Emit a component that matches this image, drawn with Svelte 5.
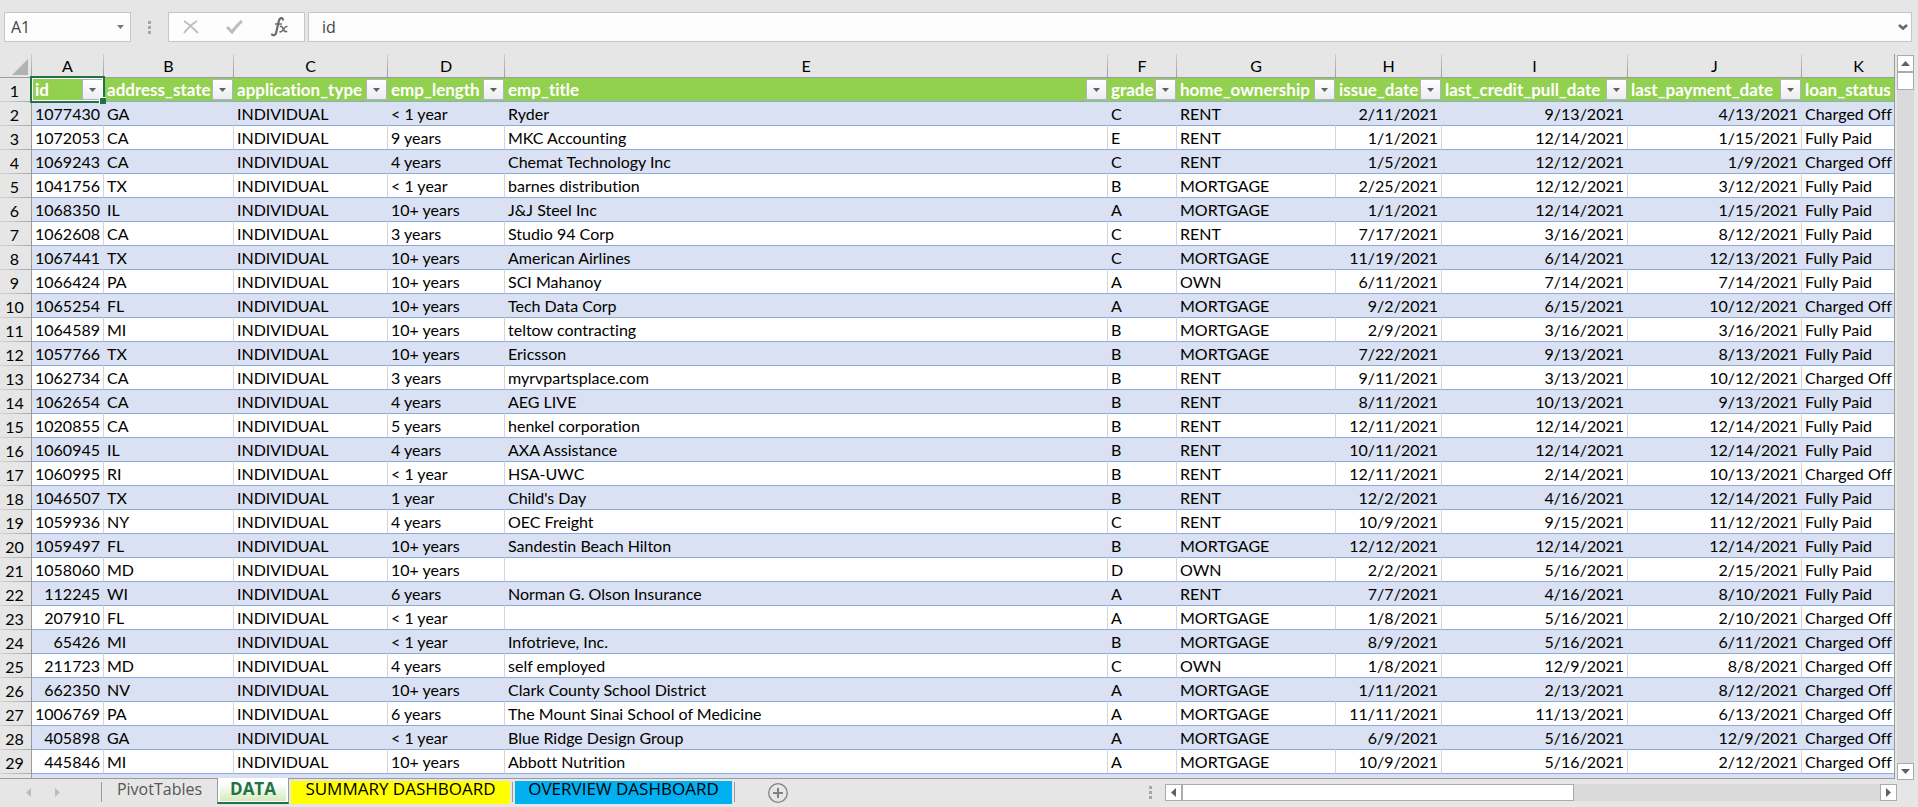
<script>
  const columns = [
    { letter: 'A', name: 'id', width: 72, align: 'right' },
    { letter: 'B', name: 'address_state', width: 130 },
    { letter: 'C', name: 'application_type', width: 154 },
    { letter: 'D', name: 'emp_length', width: 117 },
    { letter: 'E', name: 'emp_title', width: 603 },
    { letter: 'F', name: 'grade', width: 69 },
    { letter: 'G', name: 'home_ownership', width: 159 },
    { letter: 'H', name: 'issue_date', width: 106, align: 'right' },
    { letter: 'I', name: 'last_credit_pull_date', width: 186, align: 'right' },
    { letter: 'J', name: 'last_payment_date', width: 174, align: 'right' },
    { letter: 'K', name: 'loan_status', width: 114 }
  ];
  const tableWidth = columns.reduce((sum, c) => sum + c.width, 32);

  const rows = `1077430|GA|< 1 year|Ryder|C|RENT|2/11/2021|9/13/2021|4/13/2021|Charged Off
1072053|CA|9 years|MKC Accounting|E|RENT|1/1/2021|12/14/2021|1/15/2021|Fully Paid
1069243|CA|4 years|Chemat Technology Inc|C|RENT|1/5/2021|12/12/2021|1/9/2021|Charged Off
1041756|TX|< 1 year|barnes distribution|B|MORTGAGE|2/25/2021|12/12/2021|3/12/2021|Fully Paid
1068350|IL|10+ years|J&J Steel Inc|A|MORTGAGE|1/1/2021|12/14/2021|1/15/2021|Fully Paid
1062608|CA|3 years|Studio 94 Corp|C|RENT|7/17/2021|3/16/2021|8/12/2021|Fully Paid
1067441|TX|10+ years|American Airlines|C|MORTGAGE|11/19/2021|6/14/2021|12/13/2021|Fully Paid
1066424|PA|10+ years|SCI Mahanoy|A|OWN|6/11/2021|7/14/2021|7/14/2021|Fully Paid
1065254|FL|10+ years|Tech Data Corp|A|MORTGAGE|9/2/2021|6/15/2021|10/12/2021|Charged Off
1064589|MI|10+ years|teltow contracting|B|MORTGAGE|2/9/2021|3/16/2021|3/16/2021|Fully Paid
1057766|TX|10+ years|Ericsson|B|MORTGAGE|7/22/2021|9/13/2021|8/13/2021|Fully Paid
1062734|CA|3 years|myrvpartsplace.com|B|RENT|9/11/2021|3/13/2021|10/12/2021|Charged Off
1062654|CA|4 years|AEG LIVE|B|RENT|8/11/2021|10/13/2021|9/13/2021|Fully Paid
1020855|CA|5 years|henkel corporation|B|RENT|12/11/2021|12/14/2021|12/14/2021|Fully Paid
1060945|IL|4 years|AXA Assistance|B|RENT|10/11/2021|12/14/2021|12/14/2021|Fully Paid
1060995|RI|< 1 year|HSA-UWC|B|RENT|12/11/2021|2/14/2021|10/13/2021|Charged Off
1046507|TX|1 year|Child's Day|B|RENT|12/2/2021|4/16/2021|12/14/2021|Fully Paid
1059936|NY|4 years|OEC Freight|C|RENT|10/9/2021|9/15/2021|11/12/2021|Fully Paid
1059497|FL|10+ years|Sandestin Beach Hilton|B|MORTGAGE|12/12/2021|12/14/2021|12/14/2021|Fully Paid
1058060|MD|10+ years||D|OWN|2/2/2021|5/16/2021|2/15/2021|Fully Paid
112245|WI|6 years|Norman G. Olson Insurance|A|RENT|7/7/2021|4/16/2021|8/10/2021|Fully Paid
207910|FL|< 1 year||A|MORTGAGE|1/8/2021|5/16/2021|2/10/2021|Charged Off
65426|MI|< 1 year|Infotrieve, Inc.|B|MORTGAGE|8/9/2021|5/16/2021|6/11/2021|Charged Off
211723|MD|4 years|self employed|C|OWN|1/8/2021|12/9/2021|8/8/2021|Charged Off
662350|NV|10+ years|Clark County School District|A|MORTGAGE|1/11/2021|2/13/2021|8/12/2021|Charged Off
1006769|PA|6 years|The Mount Sinai School of Medicine|A|MORTGAGE|11/11/2021|11/13/2021|6/13/2021|Charged Off
405898|GA|< 1 year|Blue Ridge Design Group|A|MORTGAGE|6/9/2021|5/16/2021|12/9/2021|Charged Off
445846|MI|10+ years|Abbott Nutrition|A|MORTGAGE|10/9/2021|5/16/2021|2/12/2021|Charged Off`
    .split('\n')
    .map((line) => {
      const cells = line.split('|');
      cells.splice(2, 0, 'INDIVIDUAL');
      return cells;
    });

  const tabs = [
    { name: 'PivotTables', kind: 'plain' },
    { name: 'DATA', kind: 'active' },
    { name: 'SUMMARY DASHBOARD', kind: 'yellow' },
    { name: 'OVERVIEW DASHBOARD', kind: 'blue' }
  ];

  let cellName = $state('A1');
  let formula = $state('id');
  const dirs = {
    up: 'M0 5h9L4.500 0z',
    down: 'M0 0h9L4.500 5z',
    left: 'M5 0v9L0 4.500z',
    right: 'M0 0v9l5-4.500z'
  };
</script>

{#snippet arrow(dir)}
  <svg
    width={dir === 'up' || dir === 'down' ? 9 : 5}
    height={dir === 'up' || dir === 'down' ? 5 : 9}
    aria-hidden="true"><path d={dirs[dir]} fill="currentColor" /></svg>
{/snippet}

{#snippet grip()}
  <svg class="grip" width="3" height="13" aria-hidden="true">
    <path d="M0 0h3v3H0zM0 5h3v3H0zM0 10h3v3H0z" fill="currentColor" />
  </svg>
{/snippet}

<div class="app">
  <div class="formula-bar">
    <div class="name-box">
      <input aria-label="Name box" bind:value={cellName} />
      <button aria-label="Open name list">
        <svg width="7" height="4" aria-hidden="true"><path d="M0 0h7L3.500 4z" fill="currentColor" /></svg>
      </button>
    </div>
    {@render grip()}
    <div class="actions">
      <button aria-label="Cancel">
        <svg width="16" height="14" viewBox="0 0 16 14" fill="none" stroke="#bdbdbd" stroke-width="2"><path d="M1 1C6 4 11 9 15 13M14 1C9 4 5 8 1 13" /></svg>
      </button>
      <button aria-label="Enter">
        <svg width="18" height="14" viewBox="0 0 18 14" fill="none" stroke="#bdbdbd" stroke-width="3"><path d="M1 7l5 5C9 8 12 4 16 1" /></svg>
      </button>
      <button aria-label="Insert function">
        <svg width="17" height="20" viewBox="0 0 17 20" fill="none" stroke="#6a6a6a" stroke-linecap="round">
          <path d="M12 2.500C11 .2 8.500.5 7.800 4L5.200 15.500C4.600 18.200 2.500 19 1 17.500" stroke-width="2.200" />
          <path d="M4.500 7H10.500" stroke-width="1.400" />
          <path d="M9.500 9.500C12 7.800 12 16 15.500 14.500M15.800 9.500C13.500 8.500 12 15.800 9 14.800" stroke-width="1.600" />
        </svg>
      </button>
    </div>
    <div class="formula">
      <input aria-label="Formula" bind:value={formula} />
      <button aria-label="Expand formula bar">
        <svg width="10" height="7" viewBox="0 0 10 7" fill="none" stroke="#666" stroke-width="2.500"><path d="M1 1l4 3.500L9 1" /></svg>
      </button>
    </div>
  </div>

  <div class="workspace">
    <div class="sheet">
      <table style:width="{tableWidth}px">
        <colgroup>
          <col style:width="32px" />
          {#each columns as c}<col style:width="{c.width}px" />{/each}
        </colgroup>
        <thead>
          <tr class="letters">
            <th class="corner">
              <svg width="16" height="16" aria-hidden="true"><path d="M16 0v16H0z" fill="#b2b2b2" /></svg>
            </th>
            {#each columns as c}<th scope="col">{c.letter}</th>{/each}
          </tr>
        </thead>
        <tbody>
          <tr class="names">
            <th scope="row">1</th>
            {#each columns as c, i}
              <td class:selected={i === 0}>
                <div class="field">
                  <span>{c.name}</span>
                  <button aria-label="Filter {c.name}">
                    <svg width="7" height="4" aria-hidden="true"><path d="M0 0h7L3.500 4z" fill="currentColor" /></svg>
                  </button>
                </div>
                {#if i === 0}<div class="cursor"></div>{/if}
              </td>
            {/each}
          </tr>
          {#each rows as row, r}
            <tr class:band={r % 2 === 0}>
              <th scope="row">{r + 2}</th>
              {#each row as cell, i}<td class:right={columns[i].align === 'right'}>{cell}</td>{/each}
            </tr>
          {/each}
          <tr class="band">
            <th></th>
            {#each columns as c}<td></td>{/each}
          </tr>
        </tbody>
      </table>
    </div>
    <div class="scroll vertical">
      <button aria-label="Scroll up">{@render arrow('up')}</button>
      <div class="thumb"></div>
      <button class="end" aria-label="Scroll down">{@render arrow('down')}</button>
    </div>
  </div>

  <div class="footer">
    <div class="tab-area">
      <div class="steps">
        <button aria-label="Previous sheet">{@render arrow('left')}</button>
        <button aria-label="Next sheet">{@render arrow('right')}</button>
      </div>
      {#each tabs as t}
        <button class="tab {t.kind}"><span>{t.name}</span></button>
      {/each}
      <button class="add" aria-label="New sheet">
        <svg width="20" height="20" viewBox="0 0 20 20" fill="none" stroke="#808080"><circle cx="10" cy="10" r="9.300" stroke-width="1.300" /><path d="M10 5v10M5 10h10" stroke-width="2" /></svg>
      </button>
    </div>
    <div class="scroll-area">
      {@render grip()}
      <div class="scroll horizontal">
        <button aria-label="Scroll left">{@render arrow('left')}</button>
        <div class="thumb"></div>
        <button class="end" aria-label="Scroll right">{@render arrow('right')}</button>
      </div>
    </div>
  </div>
</div>

<style>
  :global(body) {
    margin: 0;
    background: #e6e6e6;
  }
  .app,
  .app * {
    box-sizing: border-box;
  }
  .app {
    display: flex;
    flex-direction: column;
    height: 100vh;
    overflow: hidden;
    background: #e6e6e6;
    color: #000;
    font: 16px/24px Lato, Carlito, sans-serif;
    font-variant-ligatures: none;
  }
  button,
  input {
    margin: 0;
    padding: 0;
    border: 0;
    background: none;
    font: inherit;
    color: inherit;
  }
  button {
    display: flex;
    align-items: center;
    justify-content: center;
    flex: none;
  }
  svg {
    display: block;
    flex: none;
  }

  .formula-bar {
    display: flex;
    align-items: center;
    flex: none;
    padding: 12px 6px 12px 4px;
    color: #444;
    font: 16px/22px "Open Sans", "Noto Sans", sans-serif;
  }
  .name-box,
  .actions,
  .formula {
    display: flex;
    height: 30px;
    border: 1px solid #c6c6c6;
    background: #fdfdfd;
  }
  .name-box {
    width: 127px;
  }
  .name-box input {
    flex: 1;
    min-width: 0;
    padding-left: 6px;
  }
  .name-box button {
    width: 20px;
    color: #777;
  }
  .grip {
    color: #a6a6a6;
  }
  .formula-bar > :global(.grip) {
    margin: 0 17px;
  }
  .actions {
    width: 137px;
    padding-right: 3px;
  }
  .actions button {
    flex: 1;
  }
  .formula {
    flex: 1;
    margin-left: 3px;
  }
  .formula input {
    flex: 1;
    min-width: 0;
    padding-left: 13px;
  }
  .formula button {
    width: 16px;
  }

  .workspace {
    display: flex;
    flex: 1;
    min-height: 0;
    padding-right: 4px;
    gap: 2px;
  }
  .sheet {
    flex: 1;
    min-width: 0;
    overflow: hidden;
    border-right: 1px solid #9b9b9b;
    border-bottom: 1px solid #9b9b9b;
    background: #e6e6e6;
  }
  table {
    table-layout: fixed;
    border-collapse: separate;
    border-spacing: 0;
  }
  th,
  td {
    height: 24px;
    padding: 0;
    white-space: nowrap;
    line-height: 23px;
    overflow: hidden;
  }
  th {
    background: #e6e6e6;
    font-weight: 400;
    text-align: center;
  }
  .letters th {
    border-right: 1px solid;
    border-bottom: 1px solid #9b9b9b;
    border-image: linear-gradient(#cfcfcf, #9b9b9b) 1;
  }
  .letters .corner svg {
    margin: 2px 0 0 12px;
  }
  tbody th {
    padding-right: 2px;
    border-right: 1px solid #9b9b9b;
    background: linear-gradient(90deg, #d6d6d6, #a6a6a6) bottom / 100% 1px no-repeat #e6e6e6;
  }
  td {
    padding: 0 3px;
    background: #fff;
    border-right: 1px solid #d4d4d4;
    border-bottom: 1px solid #8ea9db;
  }
  .band td {
    background: #d9e1f2;
    border-right-color: #d9e1f2;
  }
  .right {
    text-align: right;
  }
  .names td {
    padding: 0 0 0 3px;
    border-right-color: #92d050;
    background: #92d050;
    color: #fff;
    font-size: 17px;
    font-weight: 700;
  }
  .field {
    display: flex;
    justify-content: space-between;
    align-items: center;
    height: 23px;
  }
  .field button {
    width: 21px;
    height: 21px;
    border: 1px solid #b0b3bd;
    background: linear-gradient(#fff, #ecedf2);
    color: #606060;
  }
  .names .selected {
    position: relative;
    overflow: visible;
  }
  .cursor {
    position: absolute;
    inset: -2px -2px -2px -2px;
    border: 2px solid #217346;
    box-shadow: inset 0 0 0 1px #fff;
    pointer-events: none;
  }
  .cursor::after {
    content: "";
    position: absolute;
    right: -3px;
    bottom: -3px;
    width: 6px;
    height: 6px;
    border: solid #fff;
    border-width: 1px 0 0 1px;
    background: #217346;
  }

  .scroll {
    display: flex;
    background: #dadada;
    color: #606060;
  }
  .scroll button {
    width: 17px;
    height: 17px;
    border: 1px solid #ababab;
    background: #fff;
  }
  .scroll .end {
    margin-left: auto;
  }
  .thumb {
    border: 1px solid #ababab;
    background: #fff;
  }
  .vertical {
    flex-direction: column;
    width: 17px;
    margin: 1px 0 -1px;
  }
  .vertical .thumb {
    height: 18px;
  }
  .vertical .end {
    margin: auto 0 0;
  }

  .footer {
    display: flex;
    justify-content: space-between;
    flex: none;
    height: 28px;
    font: 16px/20px "Open Sans", "Noto Sans", sans-serif;
  }
  .tab-area {
    display: flex;
    align-items: flex-start;
    min-width: 0;
  }
  .steps {
    display: flex;
    justify-content: flex-end;
    width: 102px;
    height: 20px;
    margin-top: 3px;
    padding-right: 41px;
    gap: 24px;
    border-right: 1px solid #9b9b9b;
    color: #bdbdbd;
  }
  .tab {
    height: 24px;
    white-space: nowrap;
  }
  .plain {
    width: 115px;
    padding-bottom: 4px;
    color: #555;
  }
  .active {
    width: 72px;
    margin-top: -1px;
    height: 26px;
    padding: 0 2px 1px;
    border: solid #9b9b9b;
    border-width: 0 1px;
    border-bottom: 2px solid #217346;
    background: #fff;
    color: #217346;
    font-size: 17px;
    font-weight: 700;
    position: relative;
  }
  .active span {
    flex: 1;
    height: 22px;
    background: linear-gradient(#fff 20%, #d3ebbd);
  }
  .yellow,
  .blue {
    height: 23px;
    margin-top: 2px;
    padding-bottom: 7px;
    font-size: 17px;
    position: relative;
  }
  .yellow {
    width: 219px;
    margin-left: 2px;
    background: #ff0;
  }
  .blue {
    width: 217px;
    margin-left: 5px;
    background: #00b0f0;
  }
  .yellow::after,
  .blue::after {
    content: "";
    position: absolute;
    top: 1px;
    right: -3px;
    width: 1px;
    height: 20px;
    background: #9b9b9b;
  }
  .add {
    margin: 4px 0 0 36px;
  }
  .scroll-area {
    display: flex;
    align-items: center;
    width: calc(40% + 2px);
    padding: 0 21px 0 0;
    gap: 13px;
    height: 27px;
  }
  .horizontal {
    flex: 1;
  }
  .horizontal .thumb {
    width: calc(53% + 4px);
  }
</style>
